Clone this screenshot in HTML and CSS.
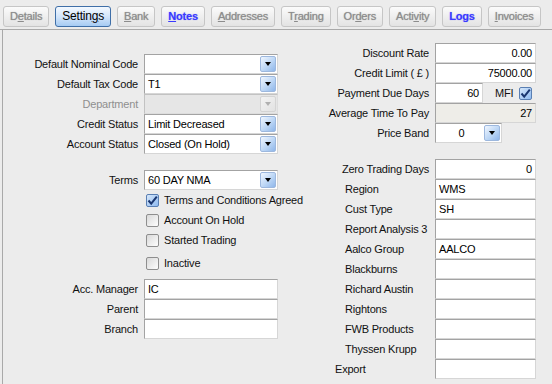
FILE: index.html
```html
<!DOCTYPE html>
<html lang="en">
<head>
    <meta charset="UTF-8">
    <title>Customer Settings</title>
    <link rel="stylesheet" href="styles.css">
</head>
<body>
    <div class="window">
        <div class="tabs">
            <span class="tab">D<u>e</u>tails</span>
            <span class="tab active">Settin<u>g</u>s</span>
            <span class="tab"><u>B</u>ank</span>
            <span class="tab flagged"><u>N</u>otes</span>
            <span class="tab"><u>A</u>ddresses</span>
            <span class="tab">T<u>r</u>ading</span>
            <span class="tab">Or<u>d</u>ers</span>
            <span class="tab">Acti<u>v</u>ity</span>
            <span class="tab flagged">Logs</span>
            <span class="tab"><u>I</u>nvoices</span>
        </div>

        <div class="panel">
            <div class="col-left">
                <div class="grid-left">
                    <label>Default Nominal Code</label>
                    <div class="field combo"><span class="val"></span><span class="drop"></span></div>
                    <label>Default Tax Code</label>
                    <div class="field combo"><span class="val">T1</span><span class="drop"></span></div>
                    <label class="disabled">Department</label>
                    <div class="field combo off"><span class="val"></span><span class="drop"></span></div>
                    <label>Credit Status</label>
                    <div class="field combo"><span class="val">Limit Decreased</span><span class="drop"></span></div>
                    <label>Account Status</label>
                    <div class="field combo"><span class="val">Closed (On Hold)</span><span class="drop"></span></div>
                </div>

                <div class="grid-left terms">
                    <label>Terms</label>
                    <div class="field combo"><span class="val">60 DAY NMA</span><span class="drop"></span></div>
                    <div class="check-row"><span class="check on"><svg width="11" height="11" viewBox="0 0 11 11"><path d="M1.5 5.5 L4.2 8.6 L9.8 1.6" fill="none" stroke="#1a3670" stroke-width="2"/></svg></span>Terms and Conditions Agreed</div>
                    <div class="check-row"><span class="check"></span>Account On Hold</div>
                    <div class="check-row"><span class="check"></span>Started Trading</div>
                    <div class="check-row inactive"><span class="check"></span>Inactive</div>
                </div>

                <div class="grid-left people">
                    <label>Acc. Manager</label>
                    <div class="field">IC</div>
                    <label>Parent</label>
                    <div class="field"></div>
                    <label>Branch</label>
                    <div class="field"></div>
                </div>
            </div>

            <div class="col-right">
                <div class="grid-right">
                    <label>Discount Rate</label>
                    <div class="field num">0.00</div>
                    <label>Credit Limit ( £ )</label>
                    <div class="field num">75000.00</div>
                    <label>Payment Due Days</label>
                    <div class="due-row">
                        <div class="field num short">60</div>
                        <span class="mfi">MFI</span>
                        <span class="check on"><svg width="11" height="11" viewBox="0 0 11 11"><path d="M1.5 5.5 L4.2 8.6 L9.8 1.6" fill="none" stroke="#1a3670" stroke-width="2"/></svg></span>
                    </div>
                    <label>Average Time To Pay</label>
                    <div class="field num readonly">27</div>
                    <label>Price Band</label>
                    <div class="field combo band"><span class="val">0</span><span class="drop"></span></div>
                </div>

                <div class="grid-right analysis">
                    <label class="wide">Zero Trading Days</label>
                    <div class="field num">0</div>
                    <label>Region</label>
                    <div class="field">WMS</div>
                    <label>Cust Type</label>
                    <div class="field">SH</div>
                    <label>Report Analysis 3</label>
                    <div class="field"></div>
                    <label>Aalco Group</label>
                    <div class="field">AALCO</div>
                    <label>Blackburns</label>
                    <div class="field"></div>
                    <label>Richard Austin</label>
                    <div class="field"></div>
                    <label>Rightons</label>
                    <div class="field"></div>
                    <label>FWB Products</label>
                    <div class="field"></div>
                    <label>Thyssen Krupp</label>
                    <div class="field"></div>
                    <label class="edge">Export</label>
                    <div class="field"></div>
                </div>
            </div>
        </div>
    </div>
</body>
</html>
```

FILE: styles.css
```css
body {
    margin: 0;
}
.window {
    width: 552px;
    height: 384px;
    overflow: hidden;
    background-color: #ececec;
    font-family: "Liberation Sans", Arial, sans-serif;
    font-size: 11px;
    letter-spacing: -0.2px;
    color: #111;
}

/* tab strip */
.tabs {
    display: flex;
    gap: 6px;
    height: 23px;
    padding: 6px 0 0 3px;
    border-bottom: 1px solid #a9a9a9;
}
.tab {
    box-sizing: border-box;
    height: 21px;
    padding: 0 6px;
    line-height: 19px;
    border: 1px solid #c6c6c6;
    border-radius: 3px;
    background: linear-gradient(#fbfbfb, #e3e3e3);
    color: #8c8c8c;
    text-shadow: 0 0 1px rgba(0,0,0,0.35);
}
.tab u { text-decoration-thickness: 1px; }
.tab.active {
    border-color: #3f6fa8;
    background: linear-gradient(#f4f9ff, #cfe3fa 55%, #a6cbf3);
    color: #000;
    text-shadow: none;
    font-size: 12px;
}
.tab.flagged {
    color: #3a3aff;
    font-weight: bold;
    text-shadow: 0 0 1px rgba(40,40,255,0.5);
}

/* body panel */
.panel {
    display: flex;
    height: 354px;
    margin-left: 2px;
    border-left: 1px solid #a9a9a9;
}
.col-left {
    width: 287px;
    padding-top: 24px;
}
.col-right {
    padding-top: 13px;
}
label {
    line-height: 20px;
    white-space: nowrap;
}
label.disabled { color: #8f8f8f; }

.grid-left {
    display: grid;
    grid-template-columns: 135px 134px;
    grid-auto-rows: 20px;
    column-gap: 6px;
}
.grid-left label { text-align: right; }
.grid-left.terms { margin-top: 16px; }
.grid-left.people { margin-top: 9px; }

.grid-right {
    display: grid;
    grid-template-columns: 139px 101px;
    grid-auto-rows: 20px;
    column-gap: 6px;
}
.grid-right label { text-align: right; }
.grid-right.analysis { margin-top: 16px; }
.grid-right.analysis label {
    text-align: left;
    padding-left: 55px;
}
.grid-right.analysis label.wide { text-align: right; padding-left: 0; }
.grid-right.analysis label.edge { padding-left: 45px; }

/* edit boxes */
.field {
    box-sizing: border-box;
    height: 20px;
    padding: 0 3px;
    line-height: 18px;
    background-color: #fff;
    border: 1px solid;
    border-color: #a3a3a3 #d6d6d6 #d6d6d6 #a3a3a3;
    white-space: nowrap;
    overflow: hidden;
    color: #000;
}
.field.num { text-align: right; }
.field.readonly { background-color: #eeede8; }
.field.short { width: 48px; }

.combo {
    display: flex;
    padding: 0 0 0 3px;
}
.combo .val { flex: 1; }
.combo .drop {
    box-sizing: border-box;
    width: 16px;
    margin: 1px 1px 1px 0;
    border: 1px solid #9db8de;
    border-radius: 2px;
    background: linear-gradient(135deg, #f1f7ff, #b7d3f4 60%, #8fb6ea);
    display: flex;
    align-items: center;
    justify-content: center;
}
.combo .drop::after {
    content: "";
    border-left: 3px solid transparent;
    border-right: 3px solid transparent;
    border-top: 4px solid #000;
}
.combo.off {
    background-color: #e6e6e6;
    border-color: #c2c2c2 #dddddd #dddddd #c2c2c2;
}
.combo.off .drop {
    border-color: #d4d4d4;
    background: linear-gradient(135deg, #f3f3f3, #e2e2e2);
}
.combo.off .drop::after { border-top-color: #b0b0b0; }
.combo.band { width: 67px; }
.combo.band .val { text-align: center; }

/* check boxes */
.check-row {
    grid-column: 2;
    display: flex;
    align-items: center;
    gap: 5px;
    padding-left: 2px;
    white-space: nowrap;
}
.check-row.inactive { margin-top: 6px; }
.check {
    box-sizing: border-box;
    width: 13px;
    height: 13px;
    border: 1px solid #8e8e8e;
    border-radius: 2px;
    background: linear-gradient(135deg, #d9d9d9, #fdfdfd);
    display: flex;
    align-items: center;
    justify-content: center;
}
.check.on {
    border-color: #5a7fb3;
    background: linear-gradient(135deg, #d6e7fa, #8fbaf0);
}
.due-row {
    display: flex;
    align-items: center;
}
.mfi {
    margin-left: 12px;
    margin-right: 6px;
    color: #111;
}
```
